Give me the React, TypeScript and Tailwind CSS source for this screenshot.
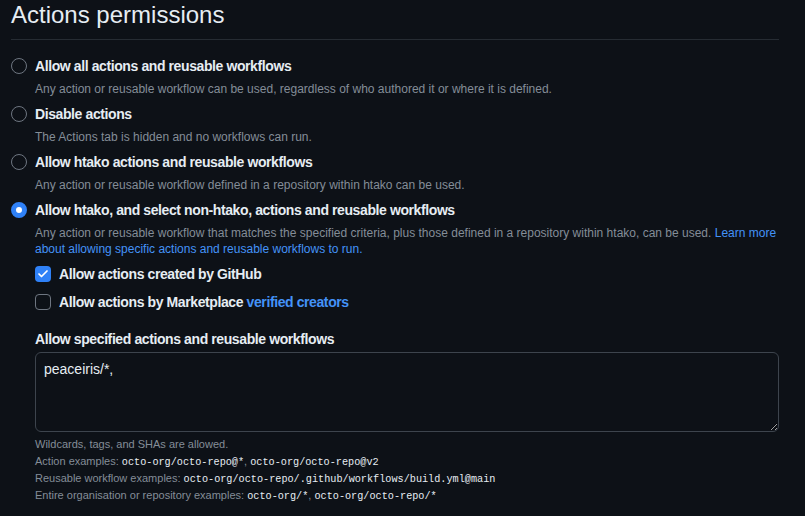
import { Check } from "lucide-react"

interface RadioItemProps {
    title: string
    checked?: boolean
    children: React.ReactNode
}

const RadioItem: React.FC<RadioItemProps> = ({ title, checked = false, children }) => {
    return (
        <div className="flex items-start gap-2">
            <div
                className={
                    checked
                        ? "mt-[2px] w-4 h-4 shrink-0 rounded-full border-[5px] border-[#2f81f7] bg-white"
                        : "mt-[2px] w-4 h-4 shrink-0 rounded-full border border-[#6e7681] bg-transparent"
                }
            />
            <div className="flex-1">
                <div className="text-[14px] leading-[20px] font-bold tracking-[-0.4px] text-[#e6edf3]">{title}</div>
                <div className="mt-[5px] text-[12px] leading-[16px] text-[#848d97]">{children}</div>
            </div>
        </div>
    )
}

const Code: React.FC<{ children: React.ReactNode }> = ({ children }) => (
    <span className="font-['Liberation_Mono',monospace] text-[10.2px] leading-none text-[#e6edf3]">{children}</span>
)

export default function App() {
    return (
        <div className="min-h-screen bg-[#0d1117] font-['Liberation_Sans',sans-serif]">
            <div className="pl-[11px] pr-[26px]">
                <h2 className="text-[24px] leading-[30px] font-normal text-[#e6edf3] pb-[9px] border-b border-[#262c33]">
                    Actions permissions
                </h2>

                <div className="mt-[16px] flex flex-col gap-[7px]">
                    <RadioItem title="Allow all actions and reusable workflows">
                        Any action or reusable workflow can be used, regardless of who authored it or where it is defined.
                    </RadioItem>
                    <RadioItem title="Disable actions">
                        The Actions tab is hidden and no workflows can run.
                    </RadioItem>
                    <RadioItem title="Allow htako actions and reusable workflows">
                        Any action or reusable workflow defined in a repository within htako can be used.
                    </RadioItem>
                    <RadioItem checked title="Allow htako, and select non-htako, actions and reusable workflows">
                        Any action or reusable workflow that matches the specified criteria, plus those defined in a repository within htako, can be used.{" "}
                        <a className="text-[#4493f8]">Learn more about allowing specific actions and reusable workflows to run.</a>
                    </RadioItem>
                </div>

                <div className="pl-6 mt-[7px]">
                    <div className="flex flex-col gap-2">
                        <div className="flex items-center gap-2 h-5">
                            <div className="w-4 h-4 rounded-[4px] bg-[#2f81f7] flex items-center justify-center">
                                <Check className="w-3 h-3 text-white" strokeWidth={3.5} />
                            </div>
                            <div className="text-[14px] leading-[20px] font-bold tracking-[-0.4px] text-[#e6edf3]">Allow actions created by GitHub</div>
                        </div>
                        <div className="flex items-center gap-2 h-5">
                            <div className="w-4 h-4 rounded-[4px] border border-[#6e7681]" />
                            <div className="text-[14px] leading-[20px] font-bold tracking-[-0.4px] text-[#e6edf3]">
                                Allow actions by Marketplace <span className="text-[#4493f8]">verified creators</span>
                            </div>
                        </div>
                    </div>

                    <div className="mt-[17px] text-[14px] leading-[20px] font-bold tracking-[-0.4px] text-[#e6edf3]">
                        Allow specified actions and reusable workflows
                    </div>
                    <textarea
                        defaultValue="peaceiris/*,"
                        className="mt-[3px] block w-[744px] h-[80px] rounded-[6px] border border-[#3d444d] bg-[#0d1117] px-2 pt-[6px] text-[14px] leading-[20px] text-[#e6edf3] outline-none [color-scheme:dark] font-['Liberation_Sans',sans-serif]"
                    />
                    <div className="mt-1 text-[11px] leading-[17px] text-[#848d97]">
                        <div>Wildcards, tags, and SHAs are allowed.</div>
                        <div>
                            Action examples: <Code>octo-org/octo-repo@*</Code>, <Code>octo-org/octo-repo@v2</Code>
                        </div>
                        <div>
                            Reusable workflow examples: <Code>octo-org/octo-repo/.github/workflows/build.yml@main</Code>
                        </div>
                        <div>
                            Entire organisation or repository examples: <Code>octo-org/*</Code>, <Code>octo-org/octo-repo/*</Code>
                        </div>
                    </div>
                </div>
            </div>
        </div>
    )
}
